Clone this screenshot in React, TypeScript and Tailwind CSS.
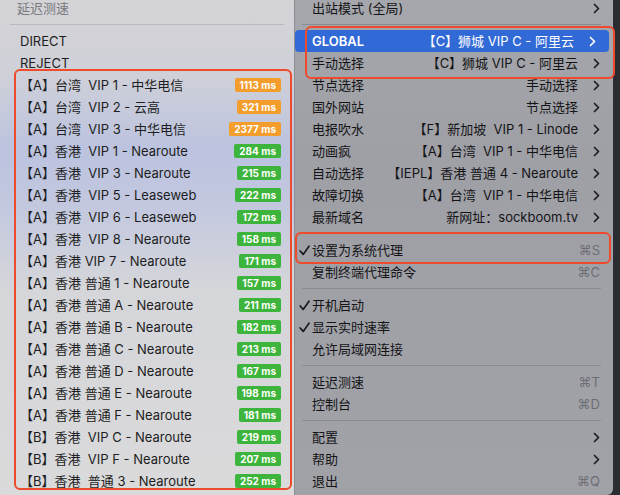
import React from "react";

type Node = { name: string; ms: number; slow?: boolean };

const nodes: Node[] = [
  { name: "【A】台湾  VIP 1 - 中华电信", ms: 1113, slow: true },
  { name: "【A】台湾  VIP 2 - 云高", ms: 321, slow: true },
  { name: "【A】台湾  VIP 3 - 中华电信", ms: 2377, slow: true },
  { name: "【A】香港  VIP 1 - Nearoute", ms: 284 },
  { name: "【A】香港  VIP 3 - Nearoute", ms: 215 },
  { name: "【A】香港  VIP 5 - Leaseweb", ms: 222 },
  { name: "【A】香港  VIP 6 - Leaseweb", ms: 172 },
  { name: "【A】香港  VIP 8 - Nearoute", ms: 158 },
  { name: "【A】香港 VIP 7 - Nearoute", ms: 171 },
  { name: "【A】香港 普通 1 - Nearoute", ms: 157 },
  { name: "【A】香港 普通 A - Nearoute", ms: 211 },
  { name: "【A】香港 普通 B - Nearoute", ms: 182 },
  { name: "【A】香港 普通 C - Nearoute", ms: 213 },
  { name: "【A】香港 普通 D - Nearoute", ms: 167 },
  { name: "【A】香港 普通 E - Nearoute", ms: 198 },
  { name: "【A】香港 普通 F - Nearoute", ms: 181 },
  { name: "【B】香港  VIP C - Nearoute", ms: 219 },
  { name: "【B】香港  VIP F - Nearoute", ms: 207 },
  { name: "【B】香港  普通 3 - Nearoute", ms: 252 },
];

type Item =
  | { sep: true }
  | {
      sep?: false;
      label: string;
      value?: string;
      sub?: boolean;
      key?: string;
      checked?: boolean;
      active?: boolean;
    };

const menu: Item[] = [
  { label: "GLOBAL", value: "【C】狮城 VIP C - 阿里云", sub: true, active: true },
  { label: "手动选择", value: "【C】狮城 VIP C - 阿里云", sub: true },
  { label: "节点选择", value: "手动选择", sub: true },
  { label: "国外网站", value: "节点选择", sub: true },
  { label: "电报吹水", value: "【F】新加坡  VIP 1 - Linode", sub: true },
  { label: "动画疯", value: "【A】台湾  VIP 1 - 中华电信", sub: true },
  { label: "自动选择", value: "【IEPL】香港 普通 4 - Nearoute", sub: true },
  { label: "故障切换", value: "【A】台湾  VIP 1 - 中华电信", sub: true },
  { label: "最新域名", value: "新网址：sockboom.tv", sub: true },
  { sep: true },
  { label: "设置为系统代理", key: "⌘S", checked: true },
  { label: "复制终端代理命令", key: "⌘C" },
  { sep: true },
  { label: "开机启动", checked: true },
  { label: "显示实时速率", checked: true },
  { label: "允许局域网连接" },
  { sep: true },
  { label: "延迟测速", key: "⌘T" },
  { label: "控制台", key: "⌘D" },
  { sep: true },
  { label: "配置", sub: true },
  { label: "帮助", sub: true },
  { label: "退出", key: "⌘Q" },
];

function Chevron({ light }: { light?: boolean }) {
  return (
    <svg width="7" height="11" viewBox="0 0 7 11" className={light ? "text-white" : "text-[#1c1c1e]"}>
      <path d="M1.5 1.5l4 4-4 4" fill="none" stroke="currentColor" strokeWidth="1.7" strokeLinecap="round" strokeLinejoin="round" />
    </svg>
  );
}

function Check() {
  return (
    <svg width="11" height="11" viewBox="0 0 11 11" className="text-[#1c1c1e]">
      <path d="M1.2 6l3 3.4L10 1.2" fill="none" stroke="currentColor" strokeWidth="1.7" strokeLinecap="round" strokeLinejoin="round" />
    </svg>
  );
}

export default function App() {
  return (
    <div className="relative flex h-[495px] w-[620px] overflow-hidden bg-[#2b2b32] text-[13px] font-['Inter','Noto_Sans_CJK_SC',sans-serif] leading-none">
      {/* proxy list submenu */}
      <div className="flex w-[294px] flex-col bg-[linear-gradient(180deg,#d4d4d7_0%,#cfd0d8_15%,#bcc3df_30%,#c3c8df_42%,#d5d6da_58%,#dadadb_100%)]">
        <div className="-mt-[3px] flex h-[22px] items-center pl-[17px] text-[#7a7a7f]">延迟测速</div>
        <div className="flex h-[11px] items-center px-[10px]">
          <div className="h-px w-full bg-[#b9b9bd]" />
        </div>
        <div className="flex h-[22px] items-center pl-[20px] text-[#1d1d22]">DIRECT</div>
        <div className="flex h-[22px] items-center pl-[20px] text-[#1d1d22]">REJECT</div>
        {nodes.map((n) => (
          <div key={n.name} className="flex h-[22px] shrink-0 items-center justify-between pl-[20px] pr-[13px] text-[#1d1d22]">
            <span className="whitespace-pre">{n.name}</span>
            <span
              className={`flex h-[14px] items-center rounded-[2px] px-[5px] text-[10px] font-bold text-white ${
                n.slow ? "bg-[#f29d2c]" : "bg-[#3db43b]"
              }`}
            >
              {n.ms} ms
            </span>
          </div>
        ))}
      </div>

      {/* main menu */}
      <div className="flex w-[319px] flex-col rounded-br-[6px] border-l border-[#8d8e94] bg-[linear-gradient(180deg,#a6a7ac_0%,#9fa0a6_30%,#a1a2a8_100%)] text-[#141416]">
        <div className="-mt-[3px] flex h-[22px] items-center justify-between pl-[17px] pr-[13px]">
          <span>出站模式 (全局)</span>
          <Chevron />
        </div>
        <div className="flex h-[11px] items-center pl-[7px] pr-[12px]">
          <div className="h-px w-full bg-[#8b8c91]" />
        </div>
        {menu.map((it, i) =>
          it.sep ? (
            <div key={i} className="flex h-[11px] items-center pl-[7px] pr-[12px]">
              <div className="h-px w-full bg-[#8b8c91]" />
            </div>
          ) : (
            <div
              key={i}
              className={`flex h-[22px] shrink-0 items-center pr-[13px] ${
                it.active ? "mr-[4px] rounded-[4px] bg-[#3169d6] pr-[9px] text-white" : ""
              }`}
            >
              <span className="flex w-[17px] justify-center pl-[1px]">{it.checked && <Check />}</span>
              <span className={it.active ? "font-semibold" : ""}>{it.label}</span>
              <span className="flex-1" />
              {it.value && <span className="mr-[15px] whitespace-pre">{it.value}</span>}
              {it.sub && <Chevron light={it.active} />}
              {it.key && <span className="text-[#6d6e73]">{it.key}</span>}
            </div>
          )
        )}
      </div>

      {/* annotation boxes */}
      <div className="pointer-events-none absolute left-[14px] top-[69px] h-[421px] w-[278px] rounded-[6px] border-2 border-[#ee4a2c]" />
      <div className="pointer-events-none absolute left-[305px] top-[26px] h-[53px] w-[310px] rounded-[6px] border-2 border-[#ee4a2c]" />
      <div className="pointer-events-none absolute left-[295px] top-[232px] h-[32px] w-[316px] rounded-[6px] border-2 border-[#ee4a2c]" />
    </div>
  );
}
